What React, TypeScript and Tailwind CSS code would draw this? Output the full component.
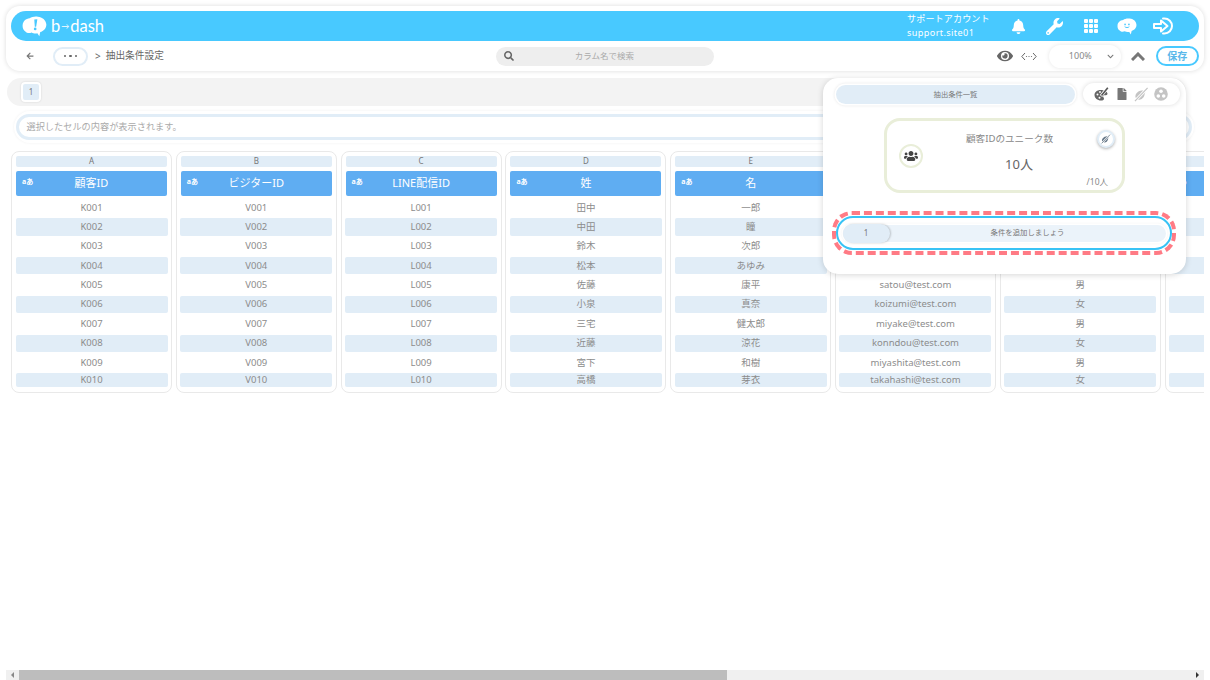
import React from "react";
import { FaBell, FaWrench, FaEye, FaSearch, FaUsers, FaFile, FaChevronDown, FaArrowLeft } from "react-icons/fa";
import { BsGrid3X3GapFill } from "react-icons/bs";

const range = (p: string) => Array.from({ length: 10 }, (_, i) => `${p}${String(i + 1).padStart(3, "0")}`);
const sex = ["男", "女", "男", "女", "男", "女", "男", "女", "男", "女"];
const cols = [
  { l: "A", h: "顧客ID", r: range("K") },
  { l: "B", h: "ビジターID", r: range("V") },
  { l: "C", h: "LINE配信ID", r: range("L") },
  { l: "D", h: "姓", r: ["田中", "中田", "鈴木", "松本", "佐藤", "小泉", "三宅", "近藤", "宮下", "高橋"] },
  { l: "E", h: "名", r: ["一郎", "瞳", "次郎", "あゆみ", "康平", "真奈", "健太郎", "涼花", "和樹", "芽衣"] },
  { l: "F", h: "メールアドレス", r: ["tanaka@test.com", "nakata@test.com", "suzuki@test.com", "matsumoto@test.com", "satou@test.com", "koizumi@test.com", "miyake@test.com", "konndou@test.com", "miyashita@test.com", "takahashi@test.com"] },
  { l: "G", h: "性別", r: sex },
  { l: "", h: "", r: Array.from({ length: 10 }, () => "") },
];

const cloud =
  "M8 2.200C10 .5 14-.2 16.500.5 21 .8 25 4 25.300 8.500 25.500 12.500 22.500 15.500 19 16.500L18 21 16 17.800C14 18.200 11.500 18 10 17 8 18 5 17.800 3.500 16 1.500 14.500.3 12 .7 9 1 5.500 4 2.500 8 2.200Z";

function Logo() {
  return (
    <svg width="25" height="21" viewBox="0 0 26 21.500">
      <path d={cloud} fill="#fff" />
      <path d="M12.800 3.500l3.200-.3-1.300 7.800h-1.400z" fill="#48c9ff" />
      <circle cx="13.700" cy="13.300" r="1.400" fill="#48c9ff" />
    </svg>
  );
}

function FaceCloud() {
  return (
    <svg width="20" height="17" viewBox="0 0 26 21.500">
      <path d={cloud} fill="#fff" />
      <circle cx="10.500" cy="8" r="1.100" fill="#48c9ff" />
      <circle cx="15.500" cy="8" r="1.100" fill="#48c9ff" />
      <path d="M10 11c1.500 1.500 4.500 1.500 6 0" stroke="#48c9ff" strokeWidth="1.300" fill="none" />
    </svg>
  );
}

function EnterIcon() {
  return (
    <svg width="20" height="18" viewBox="0 0 20 18" fill="none" stroke="#fff" strokeWidth="2">
      <path d="M1 7h7V3.500L14.500 9 8 14.500V11H1z" strokeLinejoin="round" />
      <path d="M10 1.500h1.500a7.500 7.500 0 0 1 0 15H10" strokeLinecap="round" />
    </svg>
  );
}

function CodeDots() {
  return (
    <svg width="16" height="9" viewBox="0 0 16 9" fill="none" stroke="#666666" strokeWidth="1">
      <path d="M4 1L.8 4.500 4 8M12 1l3.200 3.500L12 8" />
      <circle cx="5.500" cy="4.500" r=".6" fill="#666666" stroke="none" />
      <circle cx="8" cy="4.500" r=".6" fill="#666666" stroke="none" />
      <circle cx="10.500" cy="4.500" r=".6" fill="#666666" stroke="none" />
    </svg>
  );
}

function PaletteBrush() {
  return (
    <svg width="15" height="14" viewBox="0 0 15 14">
      <path d="M6.500 3C3 3 .5 5.200.5 8c0 3 3 5.500 6.500 5.500 2 0 3-.7 3-1.800 0-1-.9-1.300-.9-2.200 0-.8.8-1.200 1.800-1.200 1.300 0 2.600-.3 2.600-1.500C13.500 4.500 10 3 6.500 3z" fill="#666666" />
      <circle cx="3.500" cy="7.500" r="1" fill="#fff" />
      <circle cx="5.500" cy="10.700" r="1" fill="#fff" />
      <circle cx="6" cy="5" r=".9" fill="#fff" />
      <path d="M7 9L13.500 .8" stroke="#fff" strokeWidth="3" />
      <path d="M7.500 8.500L13.800 .8" stroke="#555555" strokeWidth="1.600" />
    </svg>
  );
}

function SlashBrush({ size, color }: { size: number; color: string }) {
  return (
    <svg width={size} height={size} viewBox="0 0 16 16">
      <path d="M1.500 9.500C2 6.500 5 4 8 3.800c1.500-.1 3 .4 4 1.400l-1 3.800c-.5 2-3 4.500-5 4.500-2.500 0-4.800-1.500-4.500-4z" fill={color} />
      <path d="M1 15L14.500 1" stroke="#fff" strokeWidth="3" />
      <path d="M1 15L14.500 1" stroke={color} strokeWidth="1.300" />
    </svg>
  );
}

function TripleDot() {
  return (
    <svg width="14" height="14" viewBox="0 0 14 14">
      <circle cx="7" cy="7" r="6.800" fill="#c4c4c4" />
      <circle cx="7" cy="4.200" r="1.800" fill="#fff" />
      <circle cx="4.300" cy="9" r="1.800" fill="#fff" />
      <circle cx="9.700" cy="9" r="1.800" fill="#fff" />
    </svg>
  );
}

function ChevronBold() {
  return (
    <svg width="14" height="9" viewBox="0 0 14 9" fill="none" stroke="#777777" strokeWidth="3">
      <path d="M1 8l6-6 6 6" />
    </svg>
  );
}

function Column({ l, h, r }: { l: string; h: string; r: string[] }) {
  return (
    <div className="w-[161px] shrink-0 h-[241.500px] border-[1.500px] border-[#e9e9e9] rounded-[8px] bg-white px-[3.500px] pt-[3.500px] flex flex-col">
      <div className="mx-[0.500px] h-[11px] rounded-[2px] bg-[#e1edf7] flex items-center justify-center text-[8px] text-[#777777]">{l}</div>
      <div className="relative mx-[0.500px] mt-[4px] h-[25px] rounded-[2px] bg-[#5fadf2] flex items-center justify-center text-[11px] text-white">
        <span className="absolute left-[6px] top-[6px] text-[7px] font-bold leading-[10px]">aあ</span>
        {h}
      </div>
      <div className="mt-[2.500px] flex flex-col text-[9.500px] text-[#8c8c8c]">
        {r.map((v, i) =>
          i === 9 ? (
            <div key={i} className="mt-[0.500px] h-[14px] rounded-[2px] bg-[#e1edf7] flex items-center justify-center">{v}</div>
          ) : i % 2 === 0 ? (
            <div key={i} className="h-[19.400px] flex items-center justify-center">{v}</div>
          ) : (
            <div key={i} className="my-[1.100px] h-[17.200px] rounded-[2px] bg-[#e1edf7] flex items-center justify-center">{v}</div>
          )
        )}
      </div>
    </div>
  );
}

export default function App() {
  return (
    <div className="relative w-[1210px] h-[680px] overflow-hidden bg-white flex flex-col px-[6px] pt-[6px] font-['Noto_Sans','Noto_Sans_CJK_JP',sans-serif]">
      {/* header */}
      <div className="h-[65px] shrink-0 rounded-[14px] bg-white shadow-[0_0_5px_rgba(0,0,0,0.14)] px-[5px] pt-[5px] flex flex-col">
        <div className="h-[30px] rounded-full bg-[#48c9ff] flex items-center pl-[11px] pr-[26px] text-white">
          <Logo />
          <span className="ml-[4px] text-[16.500px] leading-none font-['Lato',sans-serif] flex items-center">
            b<span className="text-[8px] mx-[1px]">→</span>dash
          </span>
          <div className="ml-auto mr-[20px] w-[84px] flex flex-col text-[9.100px] leading-[14px]">
            <span className="whitespace-nowrap tracking-[0.100px]">サポートアカウント</span>
            <span className="tracking-[0.400px]">support.site01</span>
          </div>
          <div className="flex items-center">
            <FaBell size={15} className="mr-[20px]" />
            <FaWrench size={17} className="mr-[20px]" />
            <BsGrid3X3GapFill size={16} className="mr-[18px]" />
            <span className="mr-[16px]"><FaceCloud /></span>
            <EnterIcon />
          </div>
        </div>
        <div className="flex-1 flex items-center text-[#666666]">
          <FaArrowLeft size={8} className="ml-[15px] text-[#777777]" />
          <div className="ml-[19px] w-[35px] h-[19px] rounded-full border-2 border-[#e1edf7] flex items-center justify-center gap-[3px]">
            <span className="size-[2.500px] rounded-full bg-[#666666]" />
            <span className="size-[2.500px] rounded-full bg-[#666666]" />
            <span className="size-[2.500px] rounded-full bg-[#666666]" />
          </div>
          <span className="ml-[7px] text-[10px]">&gt;</span>
          <span className="ml-[5px] text-[9.700px]">抽出条件設定</span>
          <div className="ml-[332px] w-[218px] h-[19px] rounded-full bg-[#eeeeee] flex items-center pl-[8px] text-[#666666]">
            <FaSearch size={10} />
            <span className="ml-[61px] text-[8.500px] text-[#aaaaaa]">カラム名で検索</span>
          </div>
          <FaEye size={16} className="ml-[283px] text-[#666666]" />
          <span className="ml-[8px]"><CodeDots /></span>
          <div className="ml-[12px] w-[72px] h-[23px] rounded-full bg-white shadow-[0_0_4px_rgba(0,0,0,0.10)] flex items-center text-[9px] text-[#888888]">
            <span className="ml-[20px]">100%</span>
            <FaChevronDown size={7} className="ml-[15px] text-[#777777]" />
          </div>
          <span className="ml-[10px]"><ChevronBold /></span>
          <div className="ml-[11px] w-[43px] h-[20px] rounded-full border-2 border-[#48c9ff] flex items-center justify-center text-[10px] font-bold text-[#5ab8ea]">保存</div>
        </div>
      </div>

      {/* sheet tabs */}
      <div className="mt-[7px] ml-[1px] mr-[18px] h-[28px] shrink-0 rounded-full bg-[#f3f3f3] flex items-center pl-[14px]">
        <div className="w-[20px] h-[20px] rounded-[4px] border-2 border-white bg-[#e1edf7] shadow-[0_0_2px_rgba(0,0,0,0.15)] flex items-center justify-center text-[8px] text-[#777777]">1</div>
      </div>

      {/* formula */}
      <div className="mt-[5px] ml-[8px] mr-[10px] h-[32px] shrink-0 rounded-full bg-white shadow-[0_0_3px_rgba(0,0,0,0.06)] p-[2px]">
        <div className="h-[26px] mt-[1px] rounded-full border-[3px] border-[#e1edf7] flex items-center pl-[7.500px] text-[9.200px] text-[#aaaaaa]">選択したセルの内容が表示されます。</div>
      </div>

      {/* grid */}
      <div className="mt-[8px] pl-[5px] overflow-hidden flex gap-[3.800px]">
        {cols.map((c, i) => (
          <Column key={i} {...c} />
        ))}
      </div>

      {/* scrollbar */}
      <div className="mt-auto h-[10px] shrink-0 bg-[#f0f0f0] flex items-center">
        <span className="w-[13px] flex justify-center"><span className="border-y-[3px] border-r-[3px] border-y-transparent border-r-[#888888]" /></span>
        <div className="w-[708px] h-[10px] bg-[#bdbdbd]" />
        <span className="ml-auto w-[13px] flex justify-center"><span className="border-y-[3px] border-l-[3px] border-y-transparent border-l-[#333333]" /></span>
      </div>

      {/* floating panel */}
      <div className="absolute left-[823px] top-[78px] w-[363px] h-[196px] rounded-[15px] bg-white shadow-[0_1px_6px_rgba(0,0,0,0.16)] flex flex-col text-[#777777]">
        <div className="mt-[5px] ml-[13px] flex items-center">
          <div className="w-[239px] h-[19px] rounded-full bg-[#e1edf7] shadow-[0_0_0_1.500px_#fff,0_0_3px_1.500px_rgba(0,0,0,0.10)] flex items-center justify-center text-[7.300px]">抽出条件一覧</div>
          <div className="ml-[8px] w-[97px] h-[22px] rounded-full bg-white shadow-[0_0_5px_rgba(0,0,0,0.14)] flex items-center pl-[11px]">
            <PaletteBrush />
            <FaFile size={12} className="ml-[7px] text-[#777777]" />
            <span className="ml-[6px]"><SlashBrush size={15} color="#c4c4c4" /></span>
            <span className="ml-[5px]"><TripleDot /></span>
          </div>
        </div>
        <div className="relative mt-[13px] ml-[61px] w-[241px] h-[75px] rounded-[16px] border-[3px] border-[#e9eed9] flex flex-col items-center">
          <span className="mt-[11px] ml-[10px] text-[9.600px] leading-[14px] text-[#888888]">顧客IDのユニーク数</span>
          <span className="mt-[10px] ml-[29px] text-[13px] leading-[16px] text-[#666666]">10人</span>
          <div className="absolute left-[12px] top-[23px] size-[24px] rounded-full border-2 border-[#e9eed9] bg-white flex items-center justify-center text-[#444444]"><FaUsers size={14} /></div>
          <div className="absolute left-[210px] top-[9px] size-[18px] rounded-full bg-white border-2 border-[#e1edf7] shadow-[0_1px_3px_rgba(0,0,0,0.3)] flex items-center justify-center"><SlashBrush size={10} color="#667788" /></div>
          <span className="absolute right-[14px] bottom-[3px] text-[8.500px] leading-[10px] text-[#888888]">/10人</span>
        </div>
        <div className="mt-[18px] ml-[9px] w-[344px] h-[44px] rounded-[20px] border-4 border-dashed border-[#ff7b85] flex items-center justify-center">
          <div className="w-[336px] h-[34px] shrink-0 rounded-[17px] border-2 border-[#38c3f5] flex items-center justify-center bg-white">
            <div className="w-[323px] h-[17px] rounded-full bg-[#ebf3fa] shadow-[0_0_0_1.500px_#fff,0_0_3px_1px_rgba(0,0,0,0.08)] flex items-center text-[7.400px]">
              <div className="w-[47px] h-[19px] rounded-full bg-[#e1edf7] shadow-[1px_0_2px_rgba(0,0,0,0.2)] flex items-center justify-center text-[8px]">1</div>
              <span className="flex-1 text-center">条件を追加しましょう</span>
            </div>
          </div>
        </div>
      </div>
    </div>
  );
}
